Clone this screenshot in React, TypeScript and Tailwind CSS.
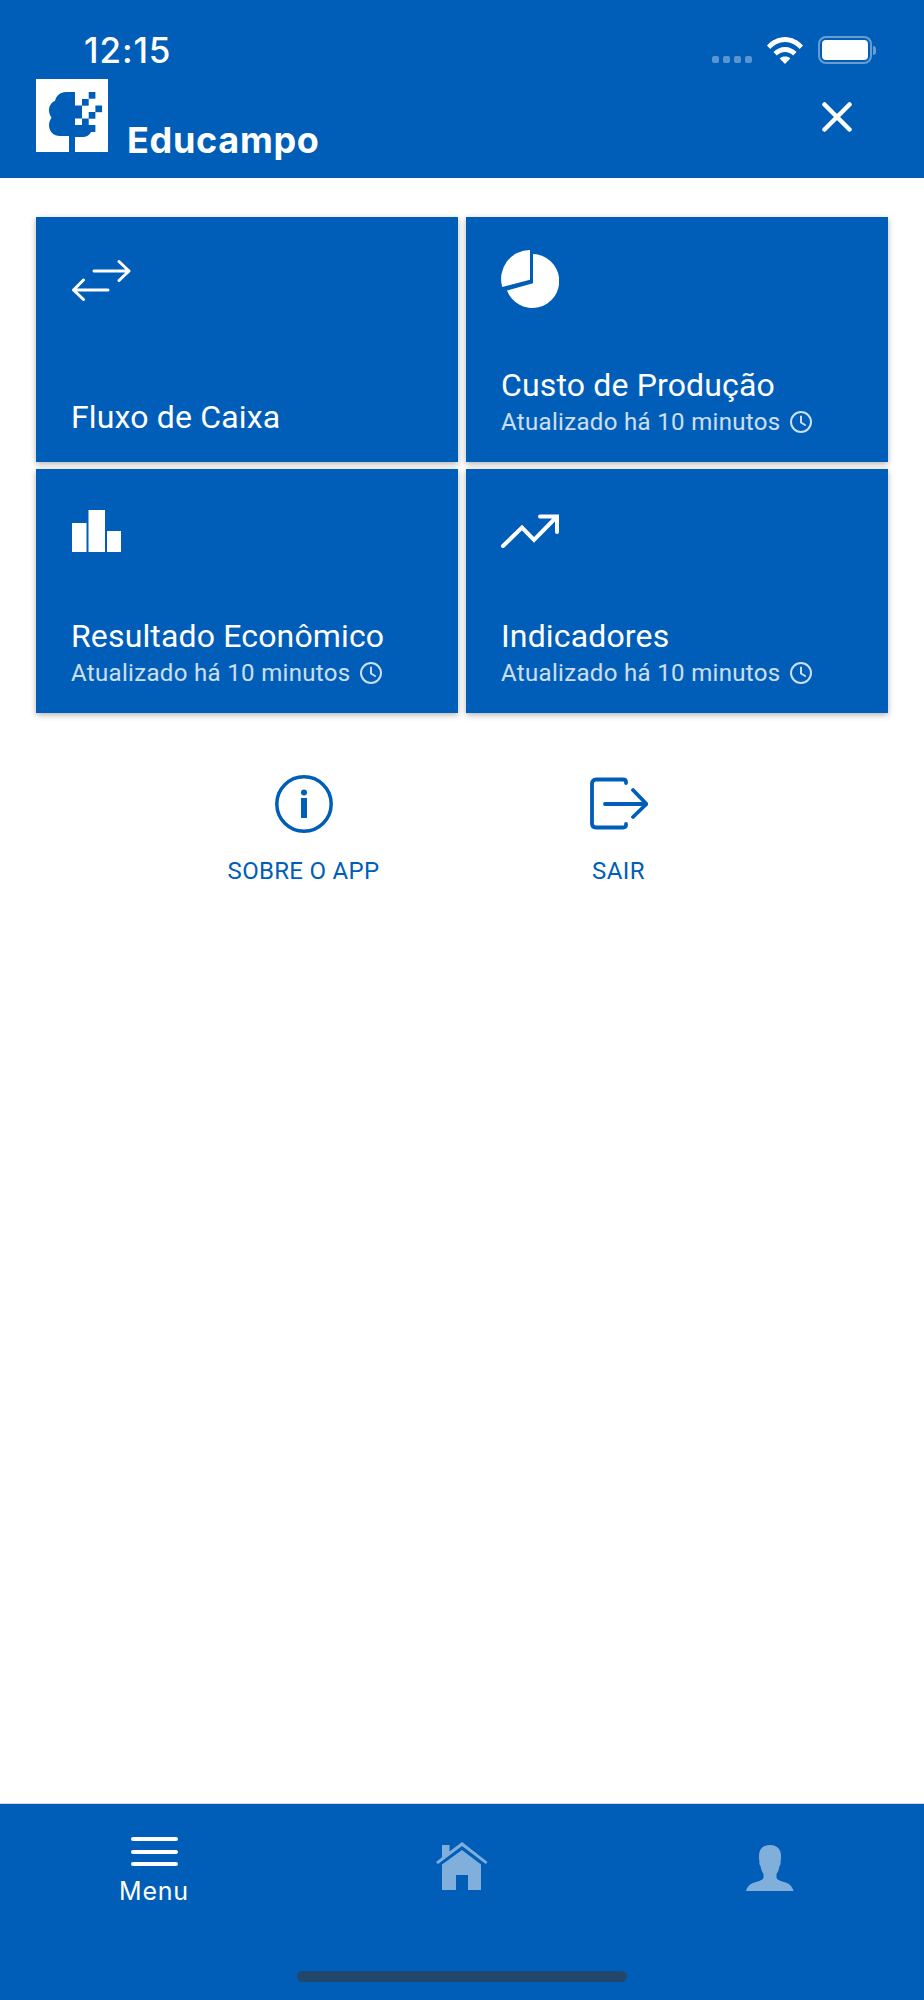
const BLUE = "#005EB8";

function Clock() {
  return (
    <svg width="24" height="24" viewBox="0 0 24 24" fill="none" stroke="currentColor" strokeWidth="2" strokeLinecap="round" strokeLinejoin="round" className="shrink-0">
      <circle cx="12" cy="12" r="10" />
      <path d="M12 6.500V12.500L16 15" />
    </svg>
  );
}

function Logo() {
  const squares = [
    [52.7, 13, 6.7, 6.7],
    [46, 20, 6.7, 6.7],
    [39, 26.5, 7, 13],
    [59.4, 26.5, 6.7, 6.7],
    [52.7, 33, 6.7, 6.7],
    [46, 39.5, 6.7, 6.7],
  ];
  return (
    <svg width="72" height="73" viewBox="0 0 72 73" className="shrink-0">
      <rect width="72" height="73" fill="#fff" />
      <path
        fill={BLUE}
        d="M39 13H30C24 13 20 17 19 22C15.500 23 13 27 13 31C13 34 14 36.500 15.500 38.500C14 41 13 43.500 13 46C13 52.500 17.500 57 24 57H33V73H39V58H46C50 58 53 57 55 53H59.400V46H39Z"
      />
      {squares.map(([x, y, w, h], i) => (
        <rect key={i} x={x} y={y} width={w} height={h} fill={BLUE} />
      ))}
    </svg>
  );
}

function Card({ icon, title, sub }: { icon: React.ReactNode; title: string; sub?: boolean }) {
  return (
    <div className="flex flex-col justify-between bg-[#005EB8] pl-9 text-white shadow-[0_2px_6px_rgba(0,0,0,0.3)]">
      <div className="flex h-[120px] items-start pt-[33px]">{icon}</div>
      <div className={sub ? "pb-[22px]" : "pb-[27px]"}>
        <div className="ml-[-1px] text-[32px] leading-[36px] tracking-[0.15px]">{title}</div>
        {sub && (
          <div className="ml-[-1px] mt-[1px] flex items-center gap-[8px] text-[24px] leading-[36px] tracking-[0.33px] text-white/80">
            Atualizado há 10 minutos
            <Clock />
          </div>
        )}
      </div>
    </div>
  );
}

export default function App() {
  return (
    <div className="flex h-[2000px] w-[924px] flex-col overflow-hidden bg-white font-['Roboto',sans-serif]">
      <header className="h-[178px] shrink-0 bg-[#005EB8] text-white">
        <div className="flex h-[79px] items-start justify-between pl-[84px] pr-[48px] pt-[30px]">
          <span className="font-['Inter',sans-serif] text-[35px] font-medium leading-[41px] tracking-[0.9px]">12:15</span>
          <div className="flex items-end gap-[14px] pt-[6px]">
            <div className="mr-[1px] flex gap-[4px] pb-[1px]">
              <span className="h-[7px] w-[7px] rounded-[2px] bg-white/35" />
              <span className="h-[7px] w-[7px] rounded-[2px] bg-white/35" />
              <span className="h-[7px] w-[7px] rounded-[2px] bg-white/35" />
              <span className="h-[7px] w-[7px] rounded-[2px] bg-white/35" />
            </div>
            <svg width="36" height="27" viewBox="0 0 36 27" fill="#fff" className="mr-[1px]">
              <path d="M0 8.500C4.500 3.500 11 0 18 0S31.500 3.500 36 8.500L32.700 12C29 8 24 5 18 5S7 8 3.300 12Z" />
              <path d="M6.500 15C9.500 12 13.500 10 18 10S26.500 12 29.500 15L26.200 18.500C24 16.300 21 15 18 15S12 16.300 9.800 18.500Z" />
              <path d="M12.700 21.500C14 20 16 19.500 18 19.500S22 20 23.300 21.500L18 27Z" />
            </svg>
            <div className="flex items-center gap-[1px]">
              <div className="flex h-[28px] w-[54px] items-center justify-center rounded-[8px] border-[2px] border-white/40 p-[2px]">
                <div className="h-full w-full rounded-[4px] bg-white" />
              </div>
              <div className="h-[9px] w-[3px] rounded-r-[3px] bg-white/40" />
            </div>
          </div>
        </div>
        <div className="flex items-start justify-between pl-9 pr-[72px]">
          <div className="flex items-end gap-[19px]">
            <Logo />
            <span className="mb-[-9px] font-['Inter',sans-serif] text-[36px] font-bold leading-[41px] tracking-[0.7px]">Educampo</span>
          </div>
          <svg width="30" height="30" viewBox="0 0 30 30" fill="none" stroke="#fff" strokeWidth="4.500" strokeLinecap="round" className="mt-[23px]">
            <path d="M2.500 2.500L27.500 27.500M27.500 2.500L2.500 27.500" />
          </svg>
        </div>
      </header>

      <main className="flex-1 px-9 pt-[39px]">
        <div className="grid grid-cols-2 grid-rows-[245px_244px] gap-x-2 gap-y-[7px]">
          <Card
            title="Fluxo de Caixa"
            icon={
              <svg width="60" height="42" viewBox="0 0 60 42" fill="none" stroke="#fff" strokeWidth="3" strokeLinecap="round" strokeLinejoin="round" className="mt-[9px]">
                <path d="M22 12H57M47 2.500L57 12L47 21.500M36 31H1.500M11.500 21L1.500 31L11.500 40.500" />
              </svg>
            }
          />
          <Card
            title="Custo de Produção"
            sub
            icon={
              <svg width="58" height="58" viewBox="0 0 58 58" fill="#fff" className="ml-[-1px]">
                <path d="M29 0V29.800L1.200 37A29 29 0 0 1 29 0Z" />
                <path d="M32 4A27 27 0 1 1 6 40.500L32 33.200Z" />
              </svg>
            }
          />
          <Card
            title="Resultado Econômico"
            sub
            icon={
              <svg width="49" height="42" viewBox="0 0 49 42" fill="#fff" className="mt-[8px]">
                <rect x="0" y="13" width="14.500" height="29" />
                <rect x="16.500" y="0" width="16.500" height="42" />
                <rect x="35" y="21" width="14.500" height="21" />
              </svg>
            }
          />
          <Card
            title="Indicadores"
            sub
            icon={
              <svg width="58" height="34" viewBox="0 0 58 34" fill="none" stroke="#fff" strokeWidth="4" strokeLinecap="round" strokeLinejoin="miter" className="ml-[-1px] mt-[12px]">
                <path d="M2 32L21 13.500L33 26L56 2.500M39 2.500H56V18" />
              </svg>
            }
          />
        </div>

        <div className="mt-[62px] flex justify-center pr-[2px] text-[#005EB8]">
          <div className="flex w-[315px] flex-col items-center">
            <svg width="58" height="58" viewBox="0 0 58 58" fill="none">
              <circle cx="29" cy="29" r="27.200" stroke="#005EB8" strokeWidth="3.500" />
              <circle cx="29" cy="17.500" r="3" fill="#005EB8" />
              <rect x="26" y="23" width="6" height="20" fill="#005EB8" />
            </svg>
            <span className="mt-[22px] text-[24px] leading-[32px] tracking-[0.3px]">SOBRE O APP</span>
          </div>
          <div className="flex w-[315px] flex-col items-center">
            <svg width="58" height="58" viewBox="0 0 58 58" fill="none" stroke="#005EB8" strokeWidth="3.800" strokeLinecap="round" strokeLinejoin="round">
              <path d="M36 8V7C36 5.500 35 4.500 33 4.500H6C3.500 4.500 2 6 2 8.500V48.500C2 51 3.500 52.500 6 52.500H33C35 52.500 36 51.500 36 50V49" />
              <path d="M15 29H56M43 15L56.500 29L43 42" />
            </svg>
            <span className="mt-[22px] text-[24px] leading-[32px] tracking-[0.5px]">SAIR</span>
          </div>
        </div>
      </main>

      <footer className="flex h-[197px] shrink-0 flex-col border-t border-[#d8d8d8] bg-[#005EB8] text-white">
        <div className="grid h-[167px] grid-cols-3">
          <div className="flex flex-col items-center pt-[33px]">
            <div className="flex w-[47px] flex-col gap-[8.500px]">
              <span className="h-[4px] rounded-full bg-white" />
              <span className="h-[4px] rounded-full bg-white" />
              <span className="h-[4px] rounded-full bg-white" />
            </div>
            <span className="mt-[11px] font-['Inter',sans-serif] text-[25px] leading-[29px] tracking-[0.8px]">Menu</span>
          </div>
          <div className="flex justify-center pt-[38px]">
            <svg width="52" height="49" viewBox="0 0 52 49" fill="#fff" fillOpacity="0.5">
              <path d="M6 3H13.500V9.500L26 0L51.500 20L49.800 22L26 4L2 22L0 20L6 15.300Z" />
              <path d="M26 8L45 22.500V48H32V33H20V48H6V22.500Z" />
            </svg>
          </div>
          <div className="flex justify-center pt-[41px]">
            <svg width="48" height="46" viewBox="0 0 48 46" fill="#fff" fillOpacity="0.5">
              <path d="M24 0C31 0 35 4 35 11C35 13 35 15 34.500 17C35 18 34.500 20 33.500 21C33 24 32 27 30.500 29V33C31.500 35.500 37 36.500 41 38C44 39.500 46.500 42 47.500 46H0C1 42 3.500 39.500 7 38C11 36.500 16.500 35.500 17.500 33V29C16 27 15 24 14.500 21C13.500 20 13 18 13.500 17C13 15 13 13 13 11C13 4 17 0 24 0Z" />
            </svg>
          </div>
        </div>
        <div className="mx-auto h-[11px] w-[330px] rounded-full bg-[#23466B]" />
      </footer>
    </div>
  );
}
